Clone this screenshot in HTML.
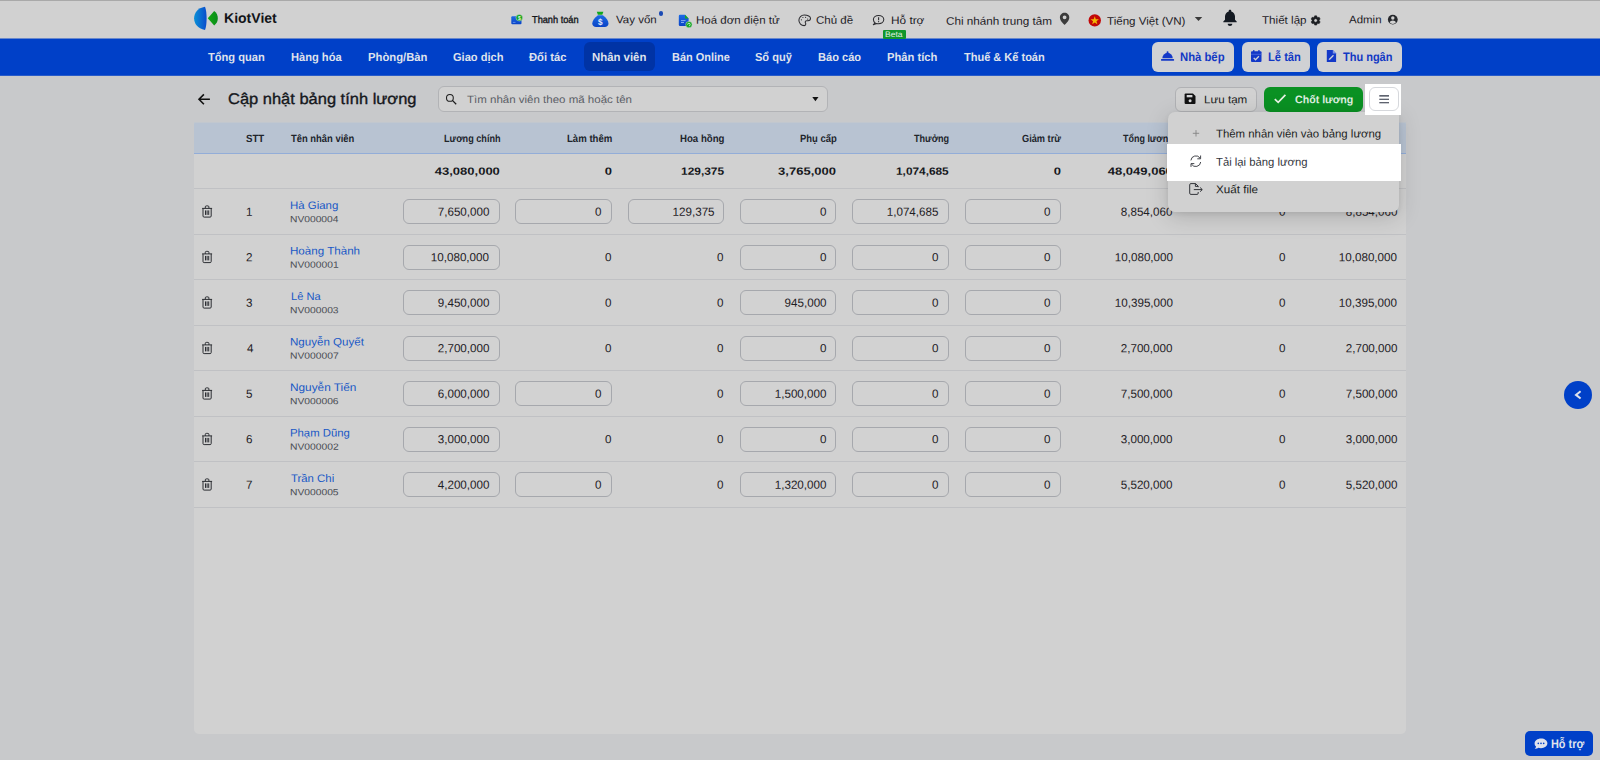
<!DOCTYPE html>
<html lang="vi">
<head>
<meta charset="utf-8">
<title>Cập nhật bảng tính lương</title>
<style>
*{box-sizing:border-box;margin:0;padding:0}
html,body{width:1600px;height:760px;overflow:hidden}
body{background:#c8c9cb;font-family:"Liberation Sans",sans-serif;color:#1b1d22;position:relative;font-size:13px}
.abs{position:absolute}
.t{position:absolute;white-space:nowrap;line-height:1}
.nbtn{border-radius:6px;background:#d0d1d4}
.inp{border:1px solid #a6a8ad;border-radius:6px;background:#d2d2d2}
.hl{background:#c0c1c4;height:1px}
</style>
</head>
<body>
<div class="abs " style="left:0px;top:1px;width:1600px;height:37px;background:#d1d1d1"></div>
<div class="abs " style="left:0px;top:0px;width:1600px;height:1px;background:#a9a9a9"></div>
<span class="t" style="left:224.49px;transform-origin:0 50%;top:11px;font-size:13.81px;font-weight:bold;color:#121418;transform:translateY(0.74px) rotate(.03deg) scaleX(1.0173);">KiotViet</span>
<span class="t" style="left:532.22px;transform-origin:0 50%;top:14px;font-size:10.03px;color:#15171b;transform:translateY(0.55px) rotate(.03deg) scaleX(0.9199);-webkit-text-stroke:0.35px #15171b;">Thanh toán</span>
<span class="t" style="left:616.19px;transform-origin:0 50%;top:14px;font-size:10.90px;color:#1d2026;transform:translateY(0.26px) rotate(.03deg) scaleX(1.0576);">Vay vốn</span>
<div class="abs " style="left:658.5px;top:11.3px;width:4.6px;height:4.6px;border-radius:50%;background:#1a4ab4"></div>
<span class="t" style="left:695.98px;transform-origin:0 50%;top:14px;font-size:10.90px;color:#1d2026;transform:translateY(0.76px) rotate(.03deg) scaleX(1.0564);">Hoá đơn điện tử</span>
<span class="t" style="left:816.32px;transform-origin:0 50%;top:14px;font-size:10.90px;color:#1d2026;transform:translateY(0.76px) rotate(.03deg) scaleX(1.0594);">Chủ đề</span>
<span class="t" style="left:890.65px;transform-origin:0 50%;top:14px;font-size:10.90px;color:#1d2026;transform:translateY(0.96px) rotate(.03deg) scaleX(1.0847);">Hỗ trợ</span>
<span class="t" style="left:945.71px;transform-origin:0 50%;top:15px;font-size:10.90px;color:#1d2026;transform:translateY(0.76px) rotate(.03deg) scaleX(1.0743);">Chi nhánh trung tâm</span>
<span class="t" style="left:1106.57px;transform-origin:0 50%;top:15px;font-size:10.90px;color:#1d2026;transform:translateY(0.76px) rotate(.03deg) scaleX(1.0626);">Tiếng Việt (VN)</span>
<span class="t" style="left:1262.27px;transform-origin:0 50%;top:14px;font-size:10.90px;color:#1d2026;transform:translateY(0.76px) rotate(.03deg) scaleX(1.0669);">Thiết lập</span>
<span class="t" style="left:1348.60px;transform-origin:0 50%;top:14px;font-size:10.90px;color:#1d2026;transform:translateY(0.26px) rotate(.03deg) scaleX(1.0532);">Admin</span>
<div class="abs " style="left:0px;top:38px;width:1600px;height:38px;background:#0040c8"></div>
<div class="abs " style="left:0px;top:38px;width:1600px;height:1px;background:#6988cc"></div>
<div class="abs " style="left:0px;top:75px;width:1600px;height:1px;background:#285bc9"></div>
<div class="abs " style="left:583.5px;top:42.4px;width:71.5px;height:29px;background:#0033a5;border-radius:6px"></div>
<span class="t" style="left:208.29px;transform-origin:0 50%;top:51px;font-size:11.63px;font-weight:bold;color:#dfe2ec;transform:translateY(0.00px) rotate(.03deg) scaleX(0.9554);">Tổng quan</span>
<span class="t" style="left:290.68px;transform-origin:0 50%;top:51px;font-size:11.63px;font-weight:bold;color:#dfe2ec;transform:translateY(0.00px) rotate(.03deg) scaleX(0.9554);">Hàng hóa</span>
<span class="t" style="left:367.67px;transform-origin:0 50%;top:51px;font-size:11.63px;font-weight:bold;color:#dfe2ec;transform:translateY(0.00px) rotate(.03deg) scaleX(0.9684);">Phòng/Bàn</span>
<span class="t" style="left:452.56px;transform-origin:0 50%;top:51px;font-size:11.63px;font-weight:bold;color:#dfe2ec;transform:translateY(0.00px) rotate(.03deg) scaleX(0.9535);">Giao dịch</span>
<span class="t" style="left:528.94px;transform-origin:0 50%;top:51px;font-size:11.63px;font-weight:bold;color:#dfe2ec;transform:translateY(0.00px) rotate(.03deg) scaleX(0.9641);">Đối tác</span>
<span class="t" style="left:591.86px;transform-origin:0 50%;top:51px;font-size:11.63px;font-weight:bold;color:#dfe2ec;transform:translateY(0.00px) rotate(.03deg) scaleX(0.9790);">Nhân viên</span>
<span class="t" style="left:671.89px;transform-origin:0 50%;top:51px;font-size:11.63px;font-weight:bold;color:#dfe2ec;transform:translateY(0.00px) rotate(.03deg) scaleX(0.9428);">Bán Online</span>
<span class="t" style="left:755.27px;transform-origin:0 50%;top:51px;font-size:11.63px;font-weight:bold;color:#dfe2ec;transform:translateY(0.00px) rotate(.03deg) scaleX(0.9499);">Sổ quỹ</span>
<span class="t" style="left:818.28px;transform-origin:0 50%;top:51px;font-size:11.63px;font-weight:bold;color:#dfe2ec;transform:translateY(0.00px) rotate(.03deg) scaleX(0.9529);">Báo cáo</span>
<span class="t" style="left:887.27px;transform-origin:0 50%;top:51px;font-size:11.63px;font-weight:bold;color:#dfe2ec;transform:translateY(0.00px) rotate(.03deg) scaleX(0.9630);">Phân tích</span>
<span class="t" style="left:963.89px;transform-origin:0 50%;top:51px;font-size:11.63px;font-weight:bold;color:#dfe2ec;transform:translateY(0.00px) rotate(.03deg) scaleX(0.9468);">Thuế &amp; Kế toán</span>
<div class="abs nbtn" style="left:1151.5px;top:42.4px;width:82px;height:29.2px;"></div>
<span class="t" style="left:1179.87px;transform-origin:0 50%;top:51px;font-size:12.21px;font-weight:bold;color:#1238c4;transform:translateY(0.24px) rotate(.03deg) scaleX(0.9256);">Nhà bếp</span>
<div class="abs nbtn" style="left:1241.5px;top:42.4px;width:68px;height:29.2px;"></div>
<span class="t" style="left:1267.87px;transform-origin:0 50%;top:51px;font-size:12.21px;font-weight:bold;color:#1238c4;transform:translateY(0.24px) rotate(.03deg) scaleX(0.9148);">Lễ tân</span>
<div class="abs nbtn" style="left:1317px;top:42.4px;width:85px;height:29.2px;"></div>
<span class="t" style="left:1342.89px;transform-origin:0 50%;top:51px;font-size:12.21px;font-weight:bold;color:#1238c4;transform:translateY(0.24px) rotate(.03deg) scaleX(0.9003);">Thu ngân</span>
<div class="abs " style="left:882.7px;top:30px;width:23.8px;height:8.7px;background:#11962b;border-radius:1px"></div>
<span class="t" style="left:885.42px;transform-origin:0 50%;top:30px;font-size:7.99px;color:#e2f0e3;transform:translateY(0.88px) rotate(.03deg) scaleX(1.0646);">Beta</span>
<span class="t" style="left:227.88px;transform-origin:0 50%;top:90px;font-size:15.41px;color:#15171c;transform:translateY(0.94px) rotate(.03deg) scaleX(1.0689);-webkit-text-stroke:0.35px #15171c;">Cập nhật bảng tính lương</span>
<div class="abs " style="left:437.5px;top:86px;width:390.5px;height:26px;border:1px solid #b2b3b6;border-radius:6px;background:#d1d1d1"></div>
<span class="t" style="left:466.77px;transform-origin:0 50%;top:93px;font-size:10.61px;color:#5b5e66;transform:translateY(0.99px) rotate(.03deg) scaleX(1.0843);">Tìm nhân viên theo mã hoặc tên</span>
<div class="abs " style="left:1174.5px;top:87px;width:82.5px;height:24.5px;border:1px solid #b0b1b4;border-radius:6px;background:#d1d1d1"></div>
<span class="t" style="left:1203.82px;transform-origin:0 50%;top:94px;font-size:11.05px;color:#1b1d22;transform:translateY(0.17px) rotate(.03deg) scaleX(1.0514);">Lưu tạm</span>
<div class="abs " style="left:1263.5px;top:87px;width:99.5px;height:24.5px;border-radius:6px;background:#0a9123"></div>
<span class="t" style="left:1294.98px;transform-origin:0 50%;top:94px;font-size:11.05px;font-weight:bold;color:#dfeee0;transform:translateY(0.14px) rotate(.03deg) scaleX(0.9613);">Chốt lương</span>
<div class="abs " style="left:194px;top:122px;width:1212px;height:612px;background:#d1d1d1;border-radius:2px 2px 5px 5px"></div>
<div class="abs " style="left:194px;top:122px;width:1212px;height:31px;background:#b8c3d2;border-radius:2px 2px 0 0"></div>
<div class="abs " style="left:194px;top:122px;width:1212px;height:1px;background:#c1c7cf;border-radius:2px 2px 0 0"></div>
<div class="abs " style="left:194px;top:153px;width:1212px;height:1px;background:#93add8"></div>
<span class="t" style="left:246.11px;transform-origin:0 50%;top:133px;font-size:10.47px;font-weight:bold;color:#20242b;transform:translateY(0.93px) rotate(.03deg) scaleX(0.9241);">STT</span>
<span class="t" style="left:290.91px;transform-origin:0 50%;top:133px;font-size:10.47px;font-weight:bold;color:#20242b;transform:translateY(0.93px) rotate(.03deg) scaleX(0.8991);">Tên nhân viên</span>
<span class="t" style="left:443.51px;transform-origin:0 50%;top:133px;font-size:10.47px;font-weight:bold;color:#20242b;transform:translateY(0.93px) rotate(.03deg) scaleX(0.8696);">Lương chính</span>
<span class="t" style="left:566.78px;transform-origin:0 50%;top:133px;font-size:10.47px;font-weight:bold;color:#20242b;transform:translateY(0.93px) rotate(.03deg) scaleX(0.9177);">Làm thêm</span>
<span class="t" style="left:680.37px;transform-origin:0 50%;top:133px;font-size:10.47px;font-weight:bold;color:#20242b;transform:translateY(0.93px) rotate(.03deg) scaleX(0.9210);">Hoa hồng</span>
<span class="t" style="left:799.99px;transform-origin:0 50%;top:133px;font-size:10.47px;font-weight:bold;color:#20242b;transform:translateY(0.93px) rotate(.03deg) scaleX(0.9034);">Phụ cấp</span>
<span class="t" style="left:914.21px;transform-origin:0 50%;top:133px;font-size:10.47px;font-weight:bold;color:#20242b;transform:translateY(0.93px) rotate(.03deg) scaleX(0.8660);">Thưởng</span>
<span class="t" style="left:1022.33px;transform-origin:0 50%;top:133px;font-size:10.47px;font-weight:bold;color:#20242b;transform:translateY(0.93px) rotate(.03deg) scaleX(0.8809);">Giảm trừ</span>
<span class="t" style="left:1123.11px;transform-origin:0 50%;top:133px;font-size:10.47px;font-weight:bold;color:#20242b;transform:translateY(0.93px) rotate(.03deg) scaleX(0.8558);">Tổng lương</span>
<span class="t" style="right:314.40px;transform-origin:100% 50%;top:133px;font-size:10.47px;font-weight:bold;color:#20242b;transform:translateY(0.93px) rotate(.03deg) scaleX(0.8878);">Đã trả NV</span>
<span class="t" style="right:202.22px;transform-origin:100% 50%;top:133px;font-size:10.47px;font-weight:bold;color:#20242b;transform:translateY(0.93px) rotate(.03deg) scaleX(0.8878);">Còn cần trả</span>
<span class="t" style="right:1100.18px;transform-origin:100% 50%;top:165px;font-size:10.57px;font-weight:bold;color:#15171b;transform:translateY(0.82px) rotate(.03deg) scaleX(1.2328);">43,080,000</span>
<span class="t" style="right:988.34px;transform-origin:100% 50%;top:165px;font-size:10.57px;font-weight:bold;color:#15171b;transform:translateY(0.82px) rotate(.03deg) scaleX(1.2328);">0</span>
<span class="t" style="left:680.78px;transform-origin:0 50%;top:165px;font-size:10.57px;font-weight:bold;color:#15171b;transform:translateY(0.82px) rotate(.03deg) scaleX(1.1283);">129,375</span>
<span class="t" style="right:763.73px;transform-origin:100% 50%;top:165px;font-size:10.57px;font-weight:bold;color:#15171b;transform:translateY(0.82px) rotate(.03deg) scaleX(1.2328);">3,765,000</span>
<span class="t" style="left:895.54px;transform-origin:0 50%;top:165px;font-size:10.57px;font-weight:bold;color:#15171b;transform:translateY(0.82px) rotate(.03deg) scaleX(1.1216);">1,074,685</span>
<span class="t" style="right:539.06px;transform-origin:100% 50%;top:165px;font-size:10.57px;font-weight:bold;color:#15171b;transform:translateY(0.82px) rotate(.03deg) scaleX(1.2328);">0</span>
<span class="t" style="right:426.76px;transform-origin:100% 50%;top:165px;font-size:10.57px;font-weight:bold;color:#15171b;transform:translateY(0.82px) rotate(.03deg) scaleX(1.2328);">48,049,060</span>
<span class="t" style="right:314.42px;transform-origin:100% 50%;top:165px;font-size:10.57px;font-weight:bold;color:#15171b;transform:translateY(0.82px) rotate(.03deg) scaleX(1.2328);">0</span>
<span class="t" style="right:202.12px;transform-origin:100% 50%;top:165px;font-size:10.57px;font-weight:bold;color:#15171b;transform:translateY(0.82px) rotate(.03deg) scaleX(1.2328);">48,049,060</span>
<div class="abs hl" style="left:194px;top:188px;width:1212px;height:1px;"></div>
<div class="abs hl" style="left:194px;top:234px;width:1212px;height:1px;"></div>
<span class="t" style="left:246.03px;transform-origin:0 50%;top:205px;font-size:11.79px;color:#1e2025;transform:translateY(0.85px) rotate(.03deg) scaleX(0.9859);">1</span>
<span class="t" style="left:290.49px;transform-origin:0 50%;top:199px;font-size:10.90px;color:#1858c6;transform:translateY(0.91px) rotate(.03deg) scaleX(1.0488);">Hà Giang</span>
<span class="t" style="left:290.48px;transform-origin:0 50%;top:215px;font-size:9.01px;color:#4a4d54;transform:translateY(0.29px) rotate(.03deg) scaleX(1.1387);">NV000004</span>
<div class="abs inp" style="left:403.0px;top:199px;width:96.5px;height:24.6px;"></div>
<span class="t" style="right:1110.61px;transform-origin:100% 50%;top:205px;font-size:11.79px;color:#1e2025;transform:translateY(0.85px) rotate(.03deg) scaleX(0.9859);">7,650,000</span>
<div class="abs inp" style="left:515.32px;top:199px;width:96.5px;height:24.6px;"></div>
<span class="t" style="right:998.26px;transform-origin:100% 50%;top:205px;font-size:11.79px;color:#1e2025;transform:translateY(0.85px) rotate(.03deg) scaleX(0.9859);">0</span>
<div class="abs inp" style="left:627.6400000000001px;top:199px;width:96.5px;height:24.6px;"></div>
<span class="t" style="right:885.90px;transform-origin:100% 50%;top:205px;font-size:11.79px;color:#1e2025;transform:translateY(0.85px) rotate(.03deg) scaleX(0.9859);">129,375</span>
<div class="abs inp" style="left:739.96px;top:199px;width:96.5px;height:24.6px;"></div>
<span class="t" style="right:773.62px;transform-origin:100% 50%;top:205px;font-size:11.79px;color:#1e2025;transform:translateY(0.85px) rotate(.03deg) scaleX(0.9859);">0</span>
<div class="abs inp" style="left:852.28px;top:199px;width:96.5px;height:24.6px;"></div>
<span class="t" style="right:661.27px;transform-origin:100% 50%;top:205px;font-size:11.79px;color:#1e2025;transform:translateY(0.85px) rotate(.03deg) scaleX(0.9859);">1,074,685</span>
<div class="abs inp" style="left:964.5999999999999px;top:199px;width:96.5px;height:24.6px;"></div>
<span class="t" style="right:548.98px;transform-origin:100% 50%;top:205px;font-size:11.79px;color:#1e2025;transform:translateY(0.85px) rotate(.03deg) scaleX(0.9859);">0</span>
<span class="t" style="right:427.21px;transform-origin:100% 50%;top:205px;font-size:11.79px;color:#1e2025;transform:translateY(0.85px) rotate(.03deg) scaleX(0.9859);">8,854,060</span>
<span class="t" style="right:314.86px;transform-origin:100% 50%;top:205px;font-size:11.79px;color:#1e2025;transform:translateY(0.85px) rotate(.03deg) scaleX(0.9859);">0</span>
<span class="t" style="right:202.57px;transform-origin:100% 50%;top:205px;font-size:11.79px;color:#1e2025;transform:translateY(0.85px) rotate(.03deg) scaleX(0.9859);">8,854,060</span>
<div class="abs hl" style="left:194px;top:279px;width:1212px;height:1px;"></div>
<span class="t" style="left:246.32px;transform-origin:0 50%;top:251px;font-size:11.79px;color:#1e2025;transform:translateY(0.35px) rotate(.03deg) scaleX(0.9859);">2</span>
<span class="t" style="left:290.47px;transform-origin:0 50%;top:245px;font-size:10.90px;color:#1858c6;transform:translateY(0.41px) rotate(.03deg) scaleX(1.0645);">Hoàng Thành</span>
<span class="t" style="left:290.48px;transform-origin:0 50%;top:260px;font-size:9.01px;color:#4a4d54;transform:translateY(0.79px) rotate(.03deg) scaleX(1.1437);">NV000001</span>
<div class="abs inp" style="left:403.0px;top:245px;width:96.5px;height:24.6px;"></div>
<span class="t" style="right:1110.59px;transform-origin:100% 50%;top:251px;font-size:11.79px;color:#1e2025;transform:translateY(0.35px) rotate(.03deg) scaleX(0.9859);">10,080,000</span>
<span class="t" style="right:988.46px;transform-origin:100% 50%;top:251px;font-size:11.79px;color:#1e2025;transform:translateY(0.35px) rotate(.03deg) scaleX(0.9859);">0</span>
<span class="t" style="right:876.14px;transform-origin:100% 50%;top:251px;font-size:11.79px;color:#1e2025;transform:translateY(0.35px) rotate(.03deg) scaleX(0.9859);">0</span>
<div class="abs inp" style="left:739.96px;top:245px;width:96.5px;height:24.6px;"></div>
<span class="t" style="right:773.62px;transform-origin:100% 50%;top:251px;font-size:11.79px;color:#1e2025;transform:translateY(0.35px) rotate(.03deg) scaleX(0.9859);">0</span>
<div class="abs inp" style="left:852.28px;top:245px;width:96.5px;height:24.6px;"></div>
<span class="t" style="right:661.30px;transform-origin:100% 50%;top:251px;font-size:11.79px;color:#1e2025;transform:translateY(0.35px) rotate(.03deg) scaleX(0.9859);">0</span>
<div class="abs inp" style="left:964.5999999999999px;top:245px;width:96.5px;height:24.6px;"></div>
<span class="t" style="right:548.98px;transform-origin:100% 50%;top:251px;font-size:11.79px;color:#1e2025;transform:translateY(0.35px) rotate(.03deg) scaleX(0.9859);">0</span>
<span class="t" style="right:427.19px;transform-origin:100% 50%;top:251px;font-size:11.79px;color:#1e2025;transform:translateY(0.35px) rotate(.03deg) scaleX(0.9859);">10,080,000</span>
<span class="t" style="right:314.86px;transform-origin:100% 50%;top:251px;font-size:11.79px;color:#1e2025;transform:translateY(0.35px) rotate(.03deg) scaleX(0.9859);">0</span>
<span class="t" style="right:202.55px;transform-origin:100% 50%;top:251px;font-size:11.79px;color:#1e2025;transform:translateY(0.35px) rotate(.03deg) scaleX(0.9859);">10,080,000</span>
<div class="abs hl" style="left:194px;top:325px;width:1212px;height:1px;"></div>
<span class="t" style="left:246.44px;transform-origin:0 50%;top:296px;font-size:11.79px;color:#1e2025;transform:translateY(0.85px) rotate(.03deg) scaleX(0.9859);">3</span>
<span class="t" style="left:290.51px;transform-origin:0 50%;top:290px;font-size:10.90px;color:#1858c6;transform:translateY(0.91px) rotate(.03deg) scaleX(1.0204);">Lê Na</span>
<span class="t" style="left:290.48px;transform-origin:0 50%;top:306px;font-size:9.01px;color:#4a4d54;transform:translateY(0.29px) rotate(.03deg) scaleX(1.1424);">NV000003</span>
<div class="abs inp" style="left:403.0px;top:290px;width:96.5px;height:24.6px;"></div>
<span class="t" style="right:1110.61px;transform-origin:100% 50%;top:296px;font-size:11.79px;color:#1e2025;transform:translateY(0.85px) rotate(.03deg) scaleX(0.9859);">9,450,000</span>
<span class="t" style="right:988.46px;transform-origin:100% 50%;top:296px;font-size:11.79px;color:#1e2025;transform:translateY(0.85px) rotate(.03deg) scaleX(0.9859);">0</span>
<span class="t" style="right:876.14px;transform-origin:100% 50%;top:296px;font-size:11.79px;color:#1e2025;transform:translateY(0.85px) rotate(.03deg) scaleX(0.9859);">0</span>
<div class="abs inp" style="left:739.96px;top:290px;width:96.5px;height:24.6px;"></div>
<span class="t" style="right:773.63px;transform-origin:100% 50%;top:296px;font-size:11.79px;color:#1e2025;transform:translateY(0.85px) rotate(.03deg) scaleX(0.9859);">945,000</span>
<div class="abs inp" style="left:852.28px;top:290px;width:96.5px;height:24.6px;"></div>
<span class="t" style="right:661.30px;transform-origin:100% 50%;top:296px;font-size:11.79px;color:#1e2025;transform:translateY(0.85px) rotate(.03deg) scaleX(0.9859);">0</span>
<div class="abs inp" style="left:964.5999999999999px;top:290px;width:96.5px;height:24.6px;"></div>
<span class="t" style="right:548.98px;transform-origin:100% 50%;top:296px;font-size:11.79px;color:#1e2025;transform:translateY(0.85px) rotate(.03deg) scaleX(0.9859);">0</span>
<span class="t" style="right:427.19px;transform-origin:100% 50%;top:296px;font-size:11.79px;color:#1e2025;transform:translateY(0.85px) rotate(.03deg) scaleX(0.9859);">10,395,000</span>
<span class="t" style="right:314.86px;transform-origin:100% 50%;top:296px;font-size:11.79px;color:#1e2025;transform:translateY(0.85px) rotate(.03deg) scaleX(0.9859);">0</span>
<span class="t" style="right:202.55px;transform-origin:100% 50%;top:296px;font-size:11.79px;color:#1e2025;transform:translateY(0.85px) rotate(.03deg) scaleX(0.9859);">10,395,000</span>
<div class="abs hl" style="left:194px;top:370px;width:1212px;height:1px;"></div>
<span class="t" style="left:246.67px;transform-origin:0 50%;top:342px;font-size:11.79px;color:#1e2025;transform:translateY(0.35px) rotate(.03deg) scaleX(0.9859);">4</span>
<span class="t" style="left:290.48px;transform-origin:0 50%;top:336px;font-size:10.90px;color:#1858c6;transform:translateY(0.41px) rotate(.03deg) scaleX(1.0608);">Nguyễn Quyết</span>
<span class="t" style="left:290.47px;transform-origin:0 50%;top:351px;font-size:9.01px;color:#4a4d54;transform:translateY(0.79px) rotate(.03deg) scaleX(1.1449);">NV000007</span>
<div class="abs inp" style="left:403.0px;top:336px;width:96.5px;height:24.6px;"></div>
<span class="t" style="right:1110.61px;transform-origin:100% 50%;top:342px;font-size:11.79px;color:#1e2025;transform:translateY(0.35px) rotate(.03deg) scaleX(0.9859);">2,700,000</span>
<span class="t" style="right:988.46px;transform-origin:100% 50%;top:342px;font-size:11.79px;color:#1e2025;transform:translateY(0.35px) rotate(.03deg) scaleX(0.9859);">0</span>
<span class="t" style="right:876.14px;transform-origin:100% 50%;top:342px;font-size:11.79px;color:#1e2025;transform:translateY(0.35px) rotate(.03deg) scaleX(0.9859);">0</span>
<div class="abs inp" style="left:739.96px;top:336px;width:96.5px;height:24.6px;"></div>
<span class="t" style="right:773.62px;transform-origin:100% 50%;top:342px;font-size:11.79px;color:#1e2025;transform:translateY(0.35px) rotate(.03deg) scaleX(0.9859);">0</span>
<div class="abs inp" style="left:852.28px;top:336px;width:96.5px;height:24.6px;"></div>
<span class="t" style="right:661.30px;transform-origin:100% 50%;top:342px;font-size:11.79px;color:#1e2025;transform:translateY(0.35px) rotate(.03deg) scaleX(0.9859);">0</span>
<div class="abs inp" style="left:964.5999999999999px;top:336px;width:96.5px;height:24.6px;"></div>
<span class="t" style="right:548.98px;transform-origin:100% 50%;top:342px;font-size:11.79px;color:#1e2025;transform:translateY(0.35px) rotate(.03deg) scaleX(0.9859);">0</span>
<span class="t" style="right:427.21px;transform-origin:100% 50%;top:342px;font-size:11.79px;color:#1e2025;transform:translateY(0.35px) rotate(.03deg) scaleX(0.9859);">2,700,000</span>
<span class="t" style="right:314.86px;transform-origin:100% 50%;top:342px;font-size:11.79px;color:#1e2025;transform:translateY(0.35px) rotate(.03deg) scaleX(0.9859);">0</span>
<span class="t" style="right:202.57px;transform-origin:100% 50%;top:342px;font-size:11.79px;color:#1e2025;transform:translateY(0.35px) rotate(.03deg) scaleX(0.9859);">2,700,000</span>
<div class="abs hl" style="left:194px;top:416px;width:1212px;height:1px;"></div>
<span class="t" style="left:246.44px;transform-origin:0 50%;top:387px;font-size:11.79px;color:#1e2025;transform:translateY(0.85px) rotate(.03deg) scaleX(0.9859);">5</span>
<span class="t" style="left:290.45px;transform-origin:0 50%;top:381px;font-size:10.90px;color:#1858c6;transform:translateY(0.91px) rotate(.03deg) scaleX(1.0852);">Nguyễn Tiến</span>
<span class="t" style="left:290.48px;transform-origin:0 50%;top:397px;font-size:9.01px;color:#4a4d54;transform:translateY(0.29px) rotate(.03deg) scaleX(1.1424);">NV000006</span>
<div class="abs inp" style="left:403.0px;top:381px;width:96.5px;height:24.6px;"></div>
<span class="t" style="right:1110.61px;transform-origin:100% 50%;top:387px;font-size:11.79px;color:#1e2025;transform:translateY(0.85px) rotate(.03deg) scaleX(0.9859);">6,000,000</span>
<div class="abs inp" style="left:515.32px;top:381px;width:96.5px;height:24.6px;"></div>
<span class="t" style="right:998.26px;transform-origin:100% 50%;top:387px;font-size:11.79px;color:#1e2025;transform:translateY(0.85px) rotate(.03deg) scaleX(0.9859);">0</span>
<span class="t" style="right:876.14px;transform-origin:100% 50%;top:387px;font-size:11.79px;color:#1e2025;transform:translateY(0.85px) rotate(.03deg) scaleX(0.9859);">0</span>
<div class="abs inp" style="left:739.96px;top:381px;width:96.5px;height:24.6px;"></div>
<span class="t" style="right:773.65px;transform-origin:100% 50%;top:387px;font-size:11.79px;color:#1e2025;transform:translateY(0.85px) rotate(.03deg) scaleX(0.9859);">1,500,000</span>
<div class="abs inp" style="left:852.28px;top:381px;width:96.5px;height:24.6px;"></div>
<span class="t" style="right:661.30px;transform-origin:100% 50%;top:387px;font-size:11.79px;color:#1e2025;transform:translateY(0.85px) rotate(.03deg) scaleX(0.9859);">0</span>
<div class="abs inp" style="left:964.5999999999999px;top:381px;width:96.5px;height:24.6px;"></div>
<span class="t" style="right:548.98px;transform-origin:100% 50%;top:387px;font-size:11.79px;color:#1e2025;transform:translateY(0.85px) rotate(.03deg) scaleX(0.9859);">0</span>
<span class="t" style="right:427.21px;transform-origin:100% 50%;top:387px;font-size:11.79px;color:#1e2025;transform:translateY(0.85px) rotate(.03deg) scaleX(0.9859);">7,500,000</span>
<span class="t" style="right:314.86px;transform-origin:100% 50%;top:387px;font-size:11.79px;color:#1e2025;transform:translateY(0.85px) rotate(.03deg) scaleX(0.9859);">0</span>
<span class="t" style="right:202.57px;transform-origin:100% 50%;top:387px;font-size:11.79px;color:#1e2025;transform:translateY(0.85px) rotate(.03deg) scaleX(0.9859);">7,500,000</span>
<div class="abs hl" style="left:194px;top:461px;width:1212px;height:1px;"></div>
<span class="t" style="left:246.32px;transform-origin:0 50%;top:433px;font-size:11.79px;color:#1e2025;transform:translateY(0.35px) rotate(.03deg) scaleX(0.9859);">6</span>
<span class="t" style="left:290.49px;transform-origin:0 50%;top:427px;font-size:10.90px;color:#1858c6;transform:translateY(0.41px) rotate(.03deg) scaleX(1.0406);">Phạm Dũng</span>
<span class="t" style="left:290.47px;transform-origin:0 50%;top:442px;font-size:9.01px;color:#4a4d54;transform:translateY(0.79px) rotate(.03deg) scaleX(1.1449);">NV000002</span>
<div class="abs inp" style="left:403.0px;top:427px;width:96.5px;height:24.6px;"></div>
<span class="t" style="right:1110.61px;transform-origin:100% 50%;top:433px;font-size:11.79px;color:#1e2025;transform:translateY(0.35px) rotate(.03deg) scaleX(0.9859);">3,000,000</span>
<span class="t" style="right:988.46px;transform-origin:100% 50%;top:433px;font-size:11.79px;color:#1e2025;transform:translateY(0.35px) rotate(.03deg) scaleX(0.9859);">0</span>
<span class="t" style="right:876.14px;transform-origin:100% 50%;top:433px;font-size:11.79px;color:#1e2025;transform:translateY(0.35px) rotate(.03deg) scaleX(0.9859);">0</span>
<div class="abs inp" style="left:739.96px;top:427px;width:96.5px;height:24.6px;"></div>
<span class="t" style="right:773.62px;transform-origin:100% 50%;top:433px;font-size:11.79px;color:#1e2025;transform:translateY(0.35px) rotate(.03deg) scaleX(0.9859);">0</span>
<div class="abs inp" style="left:852.28px;top:427px;width:96.5px;height:24.6px;"></div>
<span class="t" style="right:661.30px;transform-origin:100% 50%;top:433px;font-size:11.79px;color:#1e2025;transform:translateY(0.35px) rotate(.03deg) scaleX(0.9859);">0</span>
<div class="abs inp" style="left:964.5999999999999px;top:427px;width:96.5px;height:24.6px;"></div>
<span class="t" style="right:548.98px;transform-origin:100% 50%;top:433px;font-size:11.79px;color:#1e2025;transform:translateY(0.35px) rotate(.03deg) scaleX(0.9859);">0</span>
<span class="t" style="right:427.21px;transform-origin:100% 50%;top:433px;font-size:11.79px;color:#1e2025;transform:translateY(0.35px) rotate(.03deg) scaleX(0.9859);">3,000,000</span>
<span class="t" style="right:314.86px;transform-origin:100% 50%;top:433px;font-size:11.79px;color:#1e2025;transform:translateY(0.35px) rotate(.03deg) scaleX(0.9859);">0</span>
<span class="t" style="right:202.57px;transform-origin:100% 50%;top:433px;font-size:11.79px;color:#1e2025;transform:translateY(0.35px) rotate(.03deg) scaleX(0.9859);">3,000,000</span>
<div class="abs hl" style="left:194px;top:507px;width:1212px;height:1px;"></div>
<span class="t" style="left:246.32px;transform-origin:0 50%;top:478px;font-size:11.79px;color:#1e2025;transform:translateY(0.85px) rotate(.03deg) scaleX(0.9859);">7</span>
<span class="t" style="left:291.17px;transform-origin:0 50%;top:472px;font-size:10.90px;color:#1858c6;transform:translateY(0.91px) rotate(.03deg) scaleX(1.0435);">Trần Chi</span>
<span class="t" style="left:290.48px;transform-origin:0 50%;top:488px;font-size:9.01px;color:#4a4d54;transform:translateY(0.29px) rotate(.03deg) scaleX(1.1424);">NV000005</span>
<div class="abs inp" style="left:403.0px;top:472px;width:96.5px;height:24.6px;"></div>
<span class="t" style="right:1110.61px;transform-origin:100% 50%;top:478px;font-size:11.79px;color:#1e2025;transform:translateY(0.85px) rotate(.03deg) scaleX(0.9859);">4,200,000</span>
<div class="abs inp" style="left:515.32px;top:472px;width:96.5px;height:24.6px;"></div>
<span class="t" style="right:998.26px;transform-origin:100% 50%;top:478px;font-size:11.79px;color:#1e2025;transform:translateY(0.85px) rotate(.03deg) scaleX(0.9859);">0</span>
<span class="t" style="right:876.14px;transform-origin:100% 50%;top:478px;font-size:11.79px;color:#1e2025;transform:translateY(0.85px) rotate(.03deg) scaleX(0.9859);">0</span>
<div class="abs inp" style="left:739.96px;top:472px;width:96.5px;height:24.6px;"></div>
<span class="t" style="right:773.65px;transform-origin:100% 50%;top:478px;font-size:11.79px;color:#1e2025;transform:translateY(0.85px) rotate(.03deg) scaleX(0.9859);">1,320,000</span>
<div class="abs inp" style="left:852.28px;top:472px;width:96.5px;height:24.6px;"></div>
<span class="t" style="right:661.30px;transform-origin:100% 50%;top:478px;font-size:11.79px;color:#1e2025;transform:translateY(0.85px) rotate(.03deg) scaleX(0.9859);">0</span>
<div class="abs inp" style="left:964.5999999999999px;top:472px;width:96.5px;height:24.6px;"></div>
<span class="t" style="right:548.98px;transform-origin:100% 50%;top:478px;font-size:11.79px;color:#1e2025;transform:translateY(0.85px) rotate(.03deg) scaleX(0.9859);">0</span>
<span class="t" style="right:427.21px;transform-origin:100% 50%;top:478px;font-size:11.79px;color:#1e2025;transform:translateY(0.85px) rotate(.03deg) scaleX(0.9859);">5,520,000</span>
<span class="t" style="right:314.86px;transform-origin:100% 50%;top:478px;font-size:11.79px;color:#1e2025;transform:translateY(0.85px) rotate(.03deg) scaleX(0.9859);">0</span>
<span class="t" style="right:202.57px;transform-origin:100% 50%;top:478px;font-size:11.79px;color:#1e2025;transform:translateY(0.85px) rotate(.03deg) scaleX(0.9859);">5,520,000</span>
<div class="abs " style="left:1168px;top:112px;width:231.3px;height:100px;background:#d1d1d1;border-radius:7px 2px 7px 7px;box-shadow:0 5px 22px rgba(0,0,0,.17),0 2px 5px rgba(0,0,0,.07)"></div>
<div class="abs " style="left:1167.4px;top:144px;width:233.6px;height:37px;background:#ffffff"></div>
<div class="abs " style="left:1365px;top:84px;width:36.4px;height:31px;background:#ffffff"></div>
<div class="abs " style="left:1369.3px;top:87.2px;width:29.3px;height:24px;border:1px solid #d6d8dc;border-radius:6px;background:#fff"></div>
<span class="t" style="left:1215.57px;transform-origin:0 50%;top:128px;font-size:11.34px;color:#1b1d22;transform:translateY(0.49px) rotate(.03deg) scaleX(1.0054);">Thêm nhân viên vào bảng lương</span>
<span class="t" style="left:1215.57px;transform-origin:0 50%;top:156px;font-size:11.34px;color:#32353c;transform:translateY(0.79px) rotate(.03deg) scaleX(0.9967);">Tải lại bảng lương</span>
<span class="t" style="left:1215.51px;transform-origin:0 50%;top:184px;font-size:11.34px;color:#1b1d22;transform:translateY(0.29px) rotate(.03deg) scaleX(1.0274);">Xuất file</span>
<svg class="abs" style="left:0;top:0" width="1600" height="760" viewBox="0 0 1600 760"><defs><linearGradient id="bl" x1="0" y1="0" x2="0" y2="1"><stop offset="0" stop-color="#1c6ae4"/><stop offset="1" stop-color="#0a44c6"/></linearGradient></defs><defs><linearGradient id="lg" x1="0" y1="0" x2="1" y2="0"><stop offset="0" stop-color="#0a90d6"/><stop offset="1" stop-color="#0a4ccc"/></linearGradient><linearGradient id="gg" x1="0" y1="0" x2="1" y2="0"><stop offset="0" stop-color="#12a810"/><stop offset="1" stop-color="#0a8c1c"/></linearGradient></defs><path d="M205 6.700 C197.500 8 194.100 13 194.100 18.300 C194.100 23.600 197.500 28.600 205 29.900 C206.100 27.500 206.600 23 206.600 18.300 C206.600 13.600 206.100 9.100 205 6.700 Z" fill="url(#lg)"/><path d="M207.800 18.300 L214.200 11.100 C216.800 13 217.800 15.500 217.800 18.300 C217.800 21 216.800 23.600 214.200 25.400 Z" fill="url(#gg)"/><rect x="511.3" y="16.3" width="10.2" height="7.9" rx="1" fill="url(#bl)"/><path d="M512.8 22.4h2.7" stroke="#6d9af2" stroke-width=".8"/><circle cx="519.3" cy="17.7" r="3.3" fill="#12a822" stroke="#d1d1d1" stroke-width=".5"/><text x="519.3" y="19.5" font-size="5" font-weight="bold" fill="#e6f4e6" text-anchor="middle" font-family="Liberation Sans,sans-serif">$</text><path d="M597.9 15.2 C594.5 17.6 592.3 20.6 592.3 23.6 C592.3 26 594 27 596 27 H604.8 C606.800 27 608.5 26 608.5 23.6 C608.5 20.6 606.3 17.600 602.9 15.2 Z" fill="url(#bl)"/><path d="M596.8 11.8 H603.4 L602.300 14.700 H597.9 Z" fill="#10a81e"/><text x="600.4" y="24.6" font-size="8.2" font-weight="bold" fill="#e4ebfa" text-anchor="middle" font-family="Liberation Sans,sans-serif">$</text><path d="M680 14.8 H685 L688.6 18.5 V24.700 A1.200 1.200 0 0 1 687.4 25.9 H680 A1.200 1.200 0 0 1 678.8 24.700 V16 A1.200 1.200 0 0 1 680 14.8 Z" fill="url(#bl)"/><path d="M685 14.8 L688.6 18.5 H685 Z" fill="#14a824"/><path d="M681 20.6h4.500M681 22.500h3" stroke="#8fb2f4" stroke-width=".9"/><circle cx="688.9" cy="24.600" r="3.200" fill="#12a822" stroke="#d1d1d1" stroke-width=".5"/><path d="M687.600 24.600 a1.300 1.300 0 1 1 1.300 1.300" fill="none" stroke="#e6f4e6" stroke-width=".8"/><path d="M804.2 15 a5.300 5.300 0 1 0 0 10.600 c1 0 1.600-.7 1.600-1.500 c0-.9-.6-1.200-.6-2 c0-.8.7-1.400 1.500-1.400 h1.300 c1.500 0 2.500-1 2.500-2.400 C810.5 16.600 807.800 15 804.200 15 z" fill="none" stroke="#2c2c30" stroke-width="1.050"/><circle cx="801.400" cy="19.800" r=".6" fill="#2c2c30"/><circle cx="802.900" cy="17.500" r=".6" fill="#2c2c30"/><circle cx="805.600" cy="17.300" r=".6" fill="#2c2c30"/><circle cx="807.700" cy="19.100" r=".6" fill="#2c2c30"/><path d="M875.200 23 C874 22.100 873.400 20.900 873.400 19.600 C873.400 17.200 875.700 15.500 878.600 15.500 S883.800 17.200 883.800 19.600 S881.500 23.700 878.600 23.700 C877.900 23.700 877.300 23.600 876.700 23.500 L873.300 24.700 Z" fill="none" stroke="#2c2c30" stroke-width="1.050" stroke-linejoin="round"/><path d="M878.600 17.300v2.900" stroke="#2c2c30" stroke-width="1.100"/><circle cx="878.600" cy="21.700" r=".65" fill="#2c2c30"/><path fill-rule="evenodd" d="M1064.600 12.800 c-2.600 0 -4.700 2.100 -4.700 4.700 c0 3.500 4.700 7.500 4.700 7.500 s4.700-4 4.700-7.500 c0-2.600-2.100-4.700-4.700-4.700 z M1064.600 15.400 a1.900 1.900 0 1 0 0 3.800 a1.900 1.900 0 1 0 0 -3.800 z" fill="#3c3c3c"/><circle cx="1094.750" cy="20.400" r="6.200" fill="#c20808"/><path d="M1094.75 16.20 L1095.81 19.14 L1098.93 19.24 L1096.46 21.16 L1097.34 24.16 L1094.75 22.40 L1092.16 24.16 L1093.04 21.16 L1090.57 19.24 L1093.69 19.14 Z" fill="#f2b705"/><path d="M1194.750 17 H1202.250 L1198.500 21 Z" fill="#3a3a3a"/><path d="M1230 9.800 c-.8 0-1.300.5-1.300 1.200 v.4 c-2.400.7-3.700 2.700-3.700 5.200 v3.200 l-1.700 1.800 v.7 h13.400 v-.7 l-1.700-1.800 v-3.200 c0-2.500-1.300-4.500-3.700-5.200 v-.4 c0-.7-.5-1.200-1.300-1.200 z M1227.700 23.700 h4.600 c0 1.300-1 2.300-2.300 2.300 s-2.300-1-2.300-2.300 z" fill="#141a22"/><path fill-rule="evenodd" d="M1314.04 17.34 L1314.69 15.80 L1316.61 15.80 L1317.26 17.34 L1317.54 17.50 L1319.20 17.29 L1320.16 18.96 L1319.15 20.29 L1319.15 20.61 L1320.16 21.94 L1319.20 23.61 L1317.54 23.40 L1317.26 23.56 L1316.61 25.10 L1314.69 25.10 L1314.04 23.56 L1313.76 23.40 L1312.10 23.61 L1311.14 21.94 L1312.15 20.61 L1312.15 20.29 L1311.14 18.96 L1312.10 17.29 L1313.76 17.50 Z M1315.650 18.750 a1.700 1.700 0 1 0 0 3.400 a1.700 1.700 0 1 0 0 -3.400 z" fill="#1c1e22" stroke="#1c1e22" stroke-width=".5" stroke-linejoin="round"/><circle cx="1392.800" cy="19.600" r="4.900" fill="#26282c"/><circle cx="1392.800" cy="18" r="1.700" fill="#d1d1d1"/><path d="M1389.700 22.500 c.5-1.200 1.700-1.900 3.100-1.900 s2.600.7 3.100 1.900 a4 4 0 0 1 -6.200 0 z" fill="#d1d1d1"/><path d="M1162.350 58.200 a5.200 5.400 0 0 1 10.400 0 z" fill="#1338c8"/><circle cx="1167.550" cy="52.300" r="1" fill="#1338c8"/><rect x="1161" y="59" width="13.100" height="1.700" rx=".4" fill="#1338c8"/><rect x="1251" y="51.300" width="10.500" height="10.700" rx="1" fill="#1338c8"/><rect x="1253" y="50" width="1.400" height="2.600" rx=".4" fill="#1338c8"/><rect x="1258.200" y="50" width="1.400" height="2.600" rx=".4" fill="#1338c8"/><path d="M1251 54.300h10.500" stroke="#5672dc" stroke-width=".7"/><path d="M1253.700 57.900 l1.800 1.800 l3.400-3.500" fill="none" stroke="#cfd1d6" stroke-width="1.300"/><path d="M1326.800 50 h6 l3.300 3.400 v8.600 h-9.300 z" fill="#1338c8"/><path d="M1332.800 50 v3.400 h3.300 z" fill="#7d93e6"/><path d="M1329.300 59.500 L1333.500 55.300" stroke="#cfd1d6" stroke-width="1.300"/><path d="M1328.700 60.100 l.3-1.200 l.9.900 z" fill="#cfd1d6"/><path d="M209.900 99.300 H199.400 M203.900 94.400 L199 99.300 L203.900 104.200" fill="none" stroke="#111" stroke-width="1.600"/><circle cx="449.900" cy="97.900" r="3.400" fill="none" stroke="#1e1e1e" stroke-width="1.050"/><path d="M452.400 100.400 L456.200 104.200" stroke="#1e1e1e" stroke-width="1.300"/><path d="M812.300 97 H818.500 L815.400 101.300 Z" fill="#111"/><path d="M1185.600 93.400 h7.300 l2.600 2.600 v6.900 a1 1 0 0 1 -1 1 h-8.900 a1 1 0 0 1 -1-1 v-8.500 a1 1 0 0 1 1-1 z" fill="#111"/><rect x="1186.700" y="95" width="5.700" height="2.300" fill="#d3d4d6"/><circle cx="1190.100" cy="100.700" r="1.500" fill="#d3d4d6"/><path d="M1274.800 99.100 l3.400 3.300 l7.200-7.500" fill="none" stroke="#e8f0e4" stroke-width="1.700"/><path d="M1379.300 95.900h9.700M1379.300 99.300h9.700M1379.300 102.700h9.700" stroke="#2a3040" stroke-width="1.100"/><path d="M1192.800 133.300h6.400M1196 130.100v6.400" stroke="#858585" stroke-width=".9"/><path d="M1190.900 160.400 a5 5 0 0 1 9.200-2.200 M1200.600 155.500 v3.300 h-3.300 M1200.700 162 a5 5 0 0 1 -9.200 2.200 M1191 166.900 v-3.300 h3.300" fill="none" stroke="#3a3c42" stroke-width=".95"/><path d="M1198.200 187.200 v-1 l-2.600-2.600 h-4.700 a1.200 1.200 0 0 0 -1.200 1.200 v8.400 a1.200 1.200 0 0 0 1.200 1.200 h6.100 a1.200 1.200 0 0 0 1.200-1.200 v-1.200 M1195.400 183.700 v2.700 h2.700 M1193.800 189.600 h8.200 M1200.100 187.500 l2.200 2.100 l-2.200 2.100" fill="none" stroke="#2a2c31" stroke-width=".95"/><path d="M205.300 208.40 v-1.500 a1 1 0 0 1 1-1 h1.600 a1 1 0 0 1 1 1 v1.500 M202.100 208.40 h10 M203 208.40 v7.600 a1.100 1.100 0 0 0 1.100 1.100 h6 a1.100 1.100 0 0 0 1.100-1.100 v-7.600 M205.500 210.40 v4.500 M207.100 210.40 v4.500 M208.700 210.40 v4.500" fill="none" stroke="#2c2e33" stroke-width="1"/><path d="M205.300 253.90 v-1.500 a1 1 0 0 1 1-1 h1.600 a1 1 0 0 1 1 1 v1.500 M202.100 253.90 h10 M203 253.90 v7.600 a1.100 1.100 0 0 0 1.100 1.100 h6 a1.100 1.100 0 0 0 1.100-1.100 v-7.600 M205.500 255.90 v4.500 M207.100 255.90 v4.500 M208.700 255.90 v4.500" fill="none" stroke="#2c2e33" stroke-width="1"/><path d="M205.300 299.40 v-1.500 a1 1 0 0 1 1-1 h1.600 a1 1 0 0 1 1 1 v1.500 M202.100 299.40 h10 M203 299.40 v7.600 a1.100 1.100 0 0 0 1.100 1.100 h6 a1.100 1.100 0 0 0 1.100-1.100 v-7.600 M205.500 301.40 v4.500 M207.100 301.40 v4.500 M208.700 301.40 v4.500" fill="none" stroke="#2c2e33" stroke-width="1"/><path d="M205.300 344.90 v-1.500 a1 1 0 0 1 1-1 h1.600 a1 1 0 0 1 1 1 v1.500 M202.100 344.90 h10 M203 344.90 v7.600 a1.100 1.100 0 0 0 1.100 1.100 h6 a1.100 1.100 0 0 0 1.100-1.100 v-7.600 M205.500 346.90 v4.500 M207.100 346.90 v4.500 M208.700 346.90 v4.500" fill="none" stroke="#2c2e33" stroke-width="1"/><path d="M205.300 390.40 v-1.500 a1 1 0 0 1 1-1 h1.600 a1 1 0 0 1 1 1 v1.500 M202.100 390.40 h10 M203 390.40 v7.600 a1.100 1.100 0 0 0 1.100 1.100 h6 a1.100 1.100 0 0 0 1.100-1.100 v-7.600 M205.500 392.40 v4.500 M207.100 392.40 v4.500 M208.700 392.40 v4.500" fill="none" stroke="#2c2e33" stroke-width="1"/><path d="M205.300 435.90 v-1.500 a1 1 0 0 1 1-1 h1.600 a1 1 0 0 1 1 1 v1.500 M202.100 435.90 h10 M203 435.90 v7.600 a1.100 1.100 0 0 0 1.100 1.100 h6 a1.100 1.100 0 0 0 1.100-1.100 v-7.600 M205.500 437.90 v4.500 M207.100 437.90 v4.500 M208.700 437.90 v4.500" fill="none" stroke="#2c2e33" stroke-width="1"/><path d="M205.300 481.40 v-1.500 a1 1 0 0 1 1-1 h1.600 a1 1 0 0 1 1 1 v1.500 M202.100 481.40 h10 M203 481.40 v7.600 a1.100 1.100 0 0 0 1.100 1.100 h6 a1.100 1.100 0 0 0 1.100-1.100 v-7.600 M205.500 483.40 v4.500 M207.100 483.40 v4.500 M208.700 483.40 v4.500" fill="none" stroke="#2c2e33" stroke-width="1"/></svg>
<div class="abs " style="left:1564px;top:381px;width:28px;height:28px;border-radius:50%;background:#0040c8"></div>
<svg class="abs" style="left:1571px;top:388px;" width="14" height="14" viewBox="0 0 14 14"><path d="M9.6 3.3 L5 6.9 L9.6 10.5" fill="none" stroke="#dfe2ec" stroke-width="2"/></svg>
<div class="abs " style="left:1525px;top:731px;width:68px;height:24.6px;border-radius:5px;background:#0040c8"></div>
<span class="t" style="left:1550.79px;transform-origin:0 50%;top:738px;font-size:12.50px;font-weight:bold;color:#dfe2ec;transform:translateY(0.24px) rotate(.03deg) scaleX(0.8725);">Hỗ trợ</span>
<svg class="abs" style="left:1534px;top:738px;" width="14" height="12" viewBox="0 0 14 12"><path d="M7 0.5C3.4 0.5 0.6 2.7 0.6 5.4c0 1.2 .55 2.3 1.5 3.1-.2 1-.8 1.9-1.4 2.5 1.5 0 2.8-.5 3.7-1.2.8.3 1.7.4 2.6.4 3.6 0 6.4-2.2 6.4-4.9S10.600.5 7 .5z" fill="#dfe2ec"/><circle cx="4.3" cy="5.4" r=".8" fill="#0040c8"/><circle cx="7" cy="5.4" r=".8" fill="#0040c8"/><circle cx="9.7" cy="5.4" r=".8" fill="#0040c8"/></svg>
</body>
</html>
